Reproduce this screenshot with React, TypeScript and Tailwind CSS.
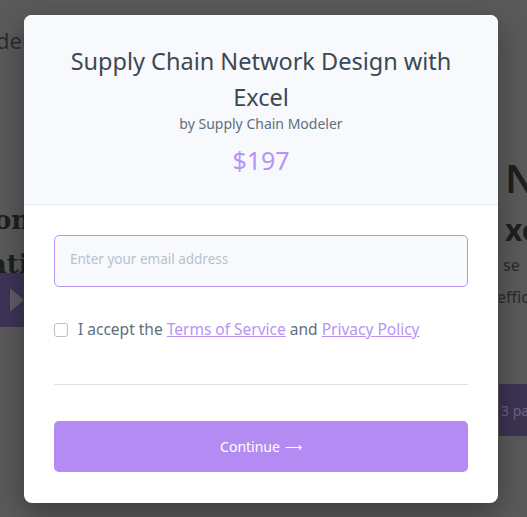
export default function App() {
  return (
    <div className="relative h-[517px] w-[527px] overflow-hidden bg-[#5a5a5a] font-['Noto_Sans',sans-serif]">
      {/* dimmed page behind the modal */}
      <div className="flex h-full justify-between text-[#1f1f1f]">
        <div className="flex w-[24px] flex-col overflow-hidden">
          <div className="mt-[24px] -ml-[4px] whitespace-nowrap text-[22px] text-[#2c2c2c]">deler</div>
          <div className="mt-[148px] -ml-[6px] whitespace-nowrap font-['DejaVu_Serif',serif] text-[26px] font-bold leading-[30px]">on</div>
          <div className="mt-[14px] -ml-[10px] whitespace-nowrap font-['DejaVu_Serif',serif] text-[26px] font-bold leading-[30px]">ati</div>
          <div className="mt-[-6px] flex h-[54px] w-[24px] items-center justify-end bg-[#3e3458]">
            <div className="h-0 w-0 border-y-[12px] border-l-[14px] border-y-transparent border-l-[#5d5d66]" />
          </div>
        </div>
        <div className="flex w-[28px] flex-col overflow-hidden">
          <div className="mt-[156px] ml-[6px] whitespace-nowrap text-[40px] font-semibold leading-[44px]">N</div>
          <div className="mt-[14px] ml-[6px] whitespace-nowrap text-[30px] font-bold leading-[32px]">xc</div>
          <div className="mt-[8px] ml-[4px] whitespace-nowrap text-[16px] leading-[22px] text-[#2a2a2a]">se</div>
          <div className="mt-[10px] ml-[-2px] whitespace-nowrap text-[16px] leading-[22px] text-[#2a2a2a]">effic</div>
          <div className="mt-[76px] flex h-[52px] items-center bg-[#3d3452] pl-[2px] text-[14px] whitespace-nowrap text-[#6c6480]">3 pa</div>
        </div>
      </div>

      {/* modal */}
      <div className="absolute left-[24px] top-[15px] flex h-[488px] w-[474px] flex-col overflow-hidden rounded-[8px] bg-white shadow-[0_10px_30px_rgba(0,0,0,0.35)]">
        <div className="flex h-[190px] flex-col items-center border-b border-[#e3e8ee] bg-[#f7f9fc] pt-[28px] text-center">
          <h1 className="px-[40px] text-[23.5px] leading-[36px] text-[#3d4852]">
            Supply Chain Network Design with Excel
          </h1>
          <p className="text-[14px] leading-[18px] text-[#606f7b]">by Supply Chain Modeler</p>
          <p className="mt-[12px] text-[25px] leading-[30px] text-[#b794f4]">$197</p>
        </div>
        <div className="flex flex-1 flex-col px-[30px] pt-[30px]">
          <input
            type="email"
            placeholder="Enter your email address"
            className="h-[52px] w-full rounded-[5px] border border-[#b794f4] bg-[#f7f9fc] px-[15px] pb-[4px] text-[13.5px] text-[#3d4852] outline-none placeholder:text-[#b8c2cc]"
          />
          <label className="mt-[31px] flex items-center gap-[10px] text-[15.5px] text-[#606f7b]">
            <span className="h-[14px] w-[14px] rounded-[3px] border border-[#b8c2cc] bg-white" />
            <span>
              I accept the{" "}
              <a className="text-[#b794f4] underline">Terms of Service</a> and{" "}
              <a className="text-[#b794f4] underline">Privacy Policy</a>
            </span>
          </label>
          <div className="mt-[43px] border-t border-[#dae1e7]" />
          <button className="mt-[36px] flex h-[51px] w-full items-center justify-center gap-[5px] rounded-[5px] bg-[#b48bf2] text-[14px] text-white">
            Continue <span className="text-[12px]">⟶</span>
          </button>
        </div>
      </div>
    </div>
  );
}
